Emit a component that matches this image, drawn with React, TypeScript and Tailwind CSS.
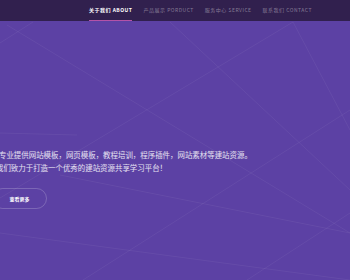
import React from 'react';

const navItems = [
  { cn: '关于我们', en: 'ABOUT', active: true },
  { cn: '产品展示', en: 'PORDUCT', active: false },
  { cn: '服务中心', en: 'SERVICE', active: false },
  { cn: '联系我们', en: 'CONTACT', active: false },
];

// faint diagonal lines behind the banner
const lines: [number, number, number, number][] = [
  [0, 43, 33, 22],
  [7, 25, 350, 233],
  [170, 22, 350, 190],
  [293, 22, 0, 198],
  [293, 22, 350, 130],
  [350, 110, 83, 280],
  [0, 133, 77, 135],
  [0, 233, 350, 280],
  [60, 175, 350, 233],
  [350, 213, 247, 280],
];

const Background = () => (
  <svg className="absolute inset-0 w-full h-full" width="350" height="280" viewBox="0 0 350 280">
    {lines.map((l, i) => (
      <line key={i} x1={l[0]} y1={l[1]} x2={l[2]} y2={l[3]} stroke="rgba(255,255,255,0.07)" strokeWidth="0.8" />
    ))}
  </svg>
);

export default function App() {
  return (
    <div
      className="relative w-[350px] h-[280px] overflow-hidden bg-[#5c41a4]"
      style={{ fontFamily: '"Noto Sans CJK SC", "Noto Sans", sans-serif' }}
    >
      <Background />

      {/* nav */}
      <div className="relative h-[21px] bg-[#31204e] flex items-stretch pl-[89px] gap-[11px]">
        {navItems.map((item) => (
          <div
            key={item.en}
            className={
              'flex items-center text-[5px] tracking-[0.5px] whitespace-nowrap border-b ' +
              (item.active
                ? 'text-white font-bold border-[#b452a8]'
                : 'text-white/40 border-transparent')
            }
          >
            {item.cn} {item.en}
          </div>
        ))}
      </div>

      {/* banner text */}
      <div className="relative pt-[127px] text-white/85 text-[7.45px] leading-[13px] -ml-[1px]">
        <p className="whitespace-nowrap">专业提供网站模板，网页模板，教程培训，程序插件，网站素材等建站资源。</p>
        <p className="whitespace-nowrap -ml-[3px]">我们致力于打造一个优秀的建站资源共享学习平台！</p>
      </div>

      <div className="relative mt-[14px] -ml-[8px]">
        <button className="w-[55px] h-[21px] rounded-full border border-white/20 text-white text-[5px] font-bold flex items-center justify-center">
          查看更多
        </button>
      </div>
    </div>
  );
}
